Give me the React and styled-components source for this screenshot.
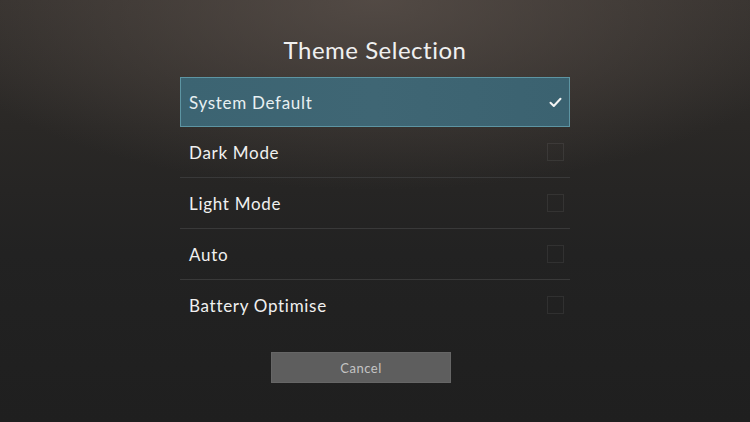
import React, { useState } from "react";
import styled, { createGlobalStyle } from "styled-components";

const GlobalStyle = createGlobalStyle`
  html, body {
    margin: 0;
    padding: 0;
    background: #1f1f1f;
  }
  * {
    box-sizing: border-box;
  }
`;

const Screen = styled.div`
  width: 750px;
  height: 422px;
  display: flex;
  flex-direction: column;
  align-items: center;
  padding-top: 35px;
  font-family: Lato, "Open Sans", sans-serif;
  color: #f2f2f2;
  background:
    radial-gradient(ellipse 460px 190px at 50% 0%, rgba(92, 82, 76, 0.75), rgba(60, 54, 50, 0) 100%),
    linear-gradient(180deg, #35312e 0%, #2a2826 30%, #222 60%, #1f1f1f 100%);
  overflow: hidden;
`;

const Title = styled.h1`
  margin: 0 0 12px;
  font-size: 24px;
  font-weight: 400;
  line-height: 30px;
  letter-spacing: 0.5px;
  color: #f0f0f0;
`;

const List = styled.div`
  width: 390px;
  display: flex;
  flex-direction: column;
`;

const Row = styled.div`
  height: 51px;
  display: flex;
  align-items: center;
  justify-content: space-between;
  padding: 0 5px 0 9px;
  font-size: 17px;
  letter-spacing: 0.7px;
  border-bottom: 1px solid ${(p) => (p.$last ? "transparent" : "#393939")};
  ${(p) =>
    p.$selected &&
    `
    height: 50px;
    border: 1.5px solid #5d95a3;
    background: linear-gradient(90deg, #3c6472 0%, #3f6674 50%, #3b6270 100%);
    padding: 0 4px 0 8px;
  `}
`;

const Label = styled.span`
  color: ${(p) => (p.$selected ? "#e8f0f2" : "#f0f0f0")};
`;

const Box = styled.span`
  width: 17px;
  height: 18px;
  display: flex;
  align-items: center;
  justify-content: center;
  margin-right: 1px;
  border: 1px solid ${(p) => (p.$on ? "transparent" : "rgba(255,255,255,0.07)")};
`;

const Cancel = styled.button`
  margin: 21px 28px 0 0;
  width: 180px;
  height: 31px;
  border: 1px solid #666;
  background: #5e5e5e;
  color: #c4c4c4;
  font-family: Lato, "Open Sans", sans-serif;
  font-size: 13px;
  letter-spacing: 0.5px;
  cursor: pointer;
`;

const Check = () => (
  <svg width="13" height="11" viewBox="0 0 13 11">
    <path
      d="M1.5 5.8 L4.8 9 L11.5 1.8"
      fill="none"
      stroke="#f4f4f4"
      strokeWidth="2"
      strokeLinecap="round"
      strokeLinejoin="round"
    />
  </svg>
);

const options = ["System Default", "Dark Mode", "Light Mode", "Auto", "Battery Optimise"];

export default function App() {
  const [selected, setSelected] = useState(0);
  return (
    <Screen>
      <GlobalStyle />
      <Title>Theme Selection</Title>
      <List>
        {options.map((name, i) => (
          <Row
            key={name}
            $selected={i === selected}
            $last={i === options.length - 1}
            onClick={() => setSelected(i)}
          >
            <Label $selected={i === selected}>{name}</Label>
            <Box $on={i === selected}>{i === selected && <Check />}</Box>
          </Row>
        ))}
      </List>
      <Cancel>Cancel</Cancel>
    </Screen>
  );
}
